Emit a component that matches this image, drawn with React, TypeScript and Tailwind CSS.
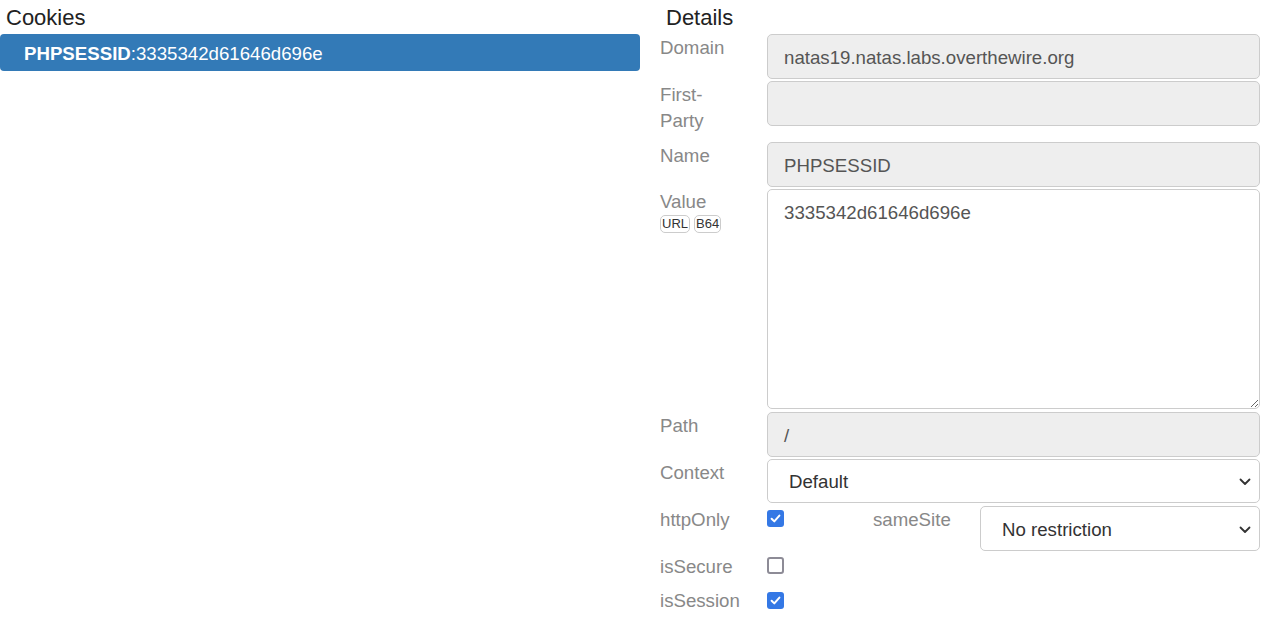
import React from "react";

const font = { fontFamily: '"Liberation Sans", Arial, Helvetica, sans-serif' };

function Label({ children, className = "" }: { children: React.ReactNode; className?: string }) {
  return (
    <div className={"w-[107px] shrink-0 pt-[1px] text-[18.67px] leading-[26px] text-[#888888] " + className}>{children}</div>
  );
}

function ReadOnlyBox({ value, h = "h-[45px]" }: { value: string; h?: string }) {
  return (
    <div
      className={
        "flex-1 flex items-center rounded-[5px] border border-[#cccccc] bg-[#eeeeee] pl-[16px] pt-[2px] text-[18.67px] text-[#555555] " +
        h
      }
    >
      {value}
    </div>
  );
}

function Chevron() {
  return (
    <svg width="12" height="8" viewBox="0 0 12 8" className="shrink-0">
      <path d="M1.5 1.5 L6 6 L10.5 1.5" fill="none" stroke="#333" strokeWidth="1.8" strokeLinecap="round" strokeLinejoin="round" />
    </svg>
  );
}

function SelectBox({ value, className = "", padL = "pl-[21px]" }: { value: string; className?: string; padL?: string }) {
  return (
    <div
      className={
        "flex items-center justify-between rounded-[5px] border border-[#cccccc] bg-white pr-[8px] pt-[2px] text-[18.67px] text-[#333333] " +
        padL +
        " " +
        className
      }
    >
      <span>{value}</span>
      <Chevron />
    </div>
  );
}

function Check({ checked }: { checked: boolean }) {
  if (checked) {
    return (
      <div className="flex h-[17px] w-[17px] items-center justify-center rounded-[3px] bg-[#3478e5]">
        <svg width="13" height="13" viewBox="0 0 13 13">
          <path d="M2.6 6.8 L5.3 9.4 L10.4 3.6" fill="none" stroke="white" strokeWidth="2" strokeLinecap="round" strokeLinejoin="round" />
        </svg>
      </div>
    );
  }
  return <div className="h-[17px] w-[17px] rounded-[3px] border-2 border-[#8d8b96] bg-white" />;
}

export default function App() {
  return (
    <div className="flex h-[638px] w-[1268px] bg-white" style={font}>
      {/* Left */}
      <div className="w-[640px] shrink-0">
        <div className="h-[34px] pl-[6px] pt-[2px] text-[22px] leading-[32px] text-[#222222]">Cookies</div>
        <div className="flex h-[37px] items-center rounded-[4px] bg-[#337ab7] pl-[24px] pt-[2px] text-[18.67px] text-white">
          <span className="font-bold">PHPSESSID</span>
          <span>:3335342d61646d696e</span>
        </div>
      </div>

      {/* Right */}
      <div className="ml-[20px] w-[600px] shrink-0">
        <div className="h-[34px] pl-[6px] pt-[2px] text-[22px] leading-[32px] text-[#222222]">Details</div>
        <div className="flex flex-col">
          <div className="flex h-[45px]">
            <Label>Domain</Label>
            <ReadOnlyBox value="natas19.natas.labs.overthewire.org" />
          </div>
          <div className="mt-[2px] flex h-[59px]">
            <Label>
              First-
              <br />
              Party
            </Label>
            <ReadOnlyBox value="" />
          </div>
          <div className="mt-[2px] flex h-[45px]">
            <Label>Name</Label>
            <ReadOnlyBox value="PHPSESSID" />
          </div>
          <div className="mt-[2px] flex h-[220px]">
            <div className="w-[107px] shrink-0">
              <div className="text-[18.67px] leading-[26px] text-[#888888]">Value</div>
              <div className="flex gap-[4px]">
                <span className="rounded-[5px] border border-[#cccccc] px-[1px] text-[13px] leading-[16px] text-[#333333]">URL</span>
                <span className="rounded-[5px] border border-[#cccccc] px-[1px] text-[13px] leading-[16px] text-[#333333]">B64</span>
              </div>
            </div>
            <textarea
              readOnly
              defaultValue="3335342d61646d696e"
              className="h-[220px] flex-1 resize-y rounded-[5px] border border-[#cccccc] bg-white pl-[16px] pt-[9px] text-[18.67px] leading-[27px] text-[#555555] outline-none"
              style={font}
            />
          </div>
          <div className="mt-[3px] flex h-[45px]">
            <Label>Path</Label>
            <ReadOnlyBox value="/" />
          </div>
          <div className="mt-[2px] flex h-[44px]">
            <Label>Context</Label>
            <SelectBox value="Default" className="h-[44px] flex-1" />
          </div>
          <div className="mt-[3px] flex h-[45px]">
            <Label>httpOnly</Label>
            <div className="mt-[4px] w-[106px] shrink-0">
              <Check checked />
            </div>
            <div className="w-[107px] shrink-0 pt-[1px] text-[18.67px] leading-[26px] text-[#888888]">sameSite</div>
            <SelectBox value="No restriction" className="h-[45px] flex-1" />
          </div>
          <div className="mt-[2px] flex h-[32px]">
            <Label>isSecure</Label>
            <div className="mt-[4px]">
              <Check checked={false} />
            </div>
          </div>
          <div className="mt-[2px] flex h-[27px]">
            <Label>isSession</Label>
            <div className="mt-[5px]">
              <Check checked />
            </div>
          </div>
        </div>
      </div>
    </div>
  );
}
